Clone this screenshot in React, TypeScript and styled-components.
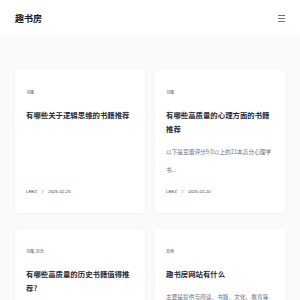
import React from "react";
import styled, { createGlobalStyle } from "styled-components";

const GlobalStyle = createGlobalStyle`
  html {
    overflow: hidden;
  }
  body {
    margin: 0;
    background-color: #f9fafb;
    font-family: "Liberation Sans", "Noto Sans CJK SC", sans-serif;
    color: #1f2937;
  }
`;

const Header = styled.header`
  display: flex;
  align-items: center;
  justify-content: space-between;
  height: 37px;
  padding: 0 15px;
  background-color: #ffffff;
`;

const Logo = styled.span`
  font-family: "Noto Sans CJK SC", sans-serif;
  font-size: 9px;
  font-weight: 700;
  color: #111827;
  line-height: 1;
`;

const MenuButton = styled.button`
  display: flex;
  border: 0;
  padding: 0;
  margin: 0;
  background: transparent;
  color: #64748b;
  cursor: pointer;
`;

const Grid = styled.main`
  display: grid;
  grid-template-columns: 130px 130px;
  column-gap: 10px;
  row-gap: 16px;
  padding: 33px 15px 20px;
`;

const Card = styled.article`
  display: flex;
  flex-direction: column;
  padding: 19px 11px 18px;
  background-color: #ffffff;
  border-radius: 2px;
  box-shadow: 0 1px 3px rgba(15, 23, 42, 0.04);
`;

const Tag = styled.div`
  font-family: "Noto Sans CJK SC", sans-serif;
  font-size: 4px;
  line-height: 6px;
  color: #4b5563;
`;

const Title = styled.h2`
  margin: 13px 0 0;
  font-family: "Noto Sans CJK SC", sans-serif;
  font-size: 7.4px;
  font-weight: 700;
  line-height: 14px;
  color: #1f2937;
`;

const Desc = styled.p`
  margin: 7px 0 11px;
  font-family: "Noto Sans CJK SC", sans-serif;
  font-size: 5.7px;
  line-height: 17.5px;
  color: #6b7280;
`;

const Meta = styled.div`
  display: flex;
  margin-top: auto;
  font-family: "Liberation Sans", sans-serif;
  font-size: 4.4px;
  line-height: 6px;
  color: #374151;
`;

const Slash = styled.span`
  margin: 0 5px;
`;

type Post = {
  id: number;
  tag: string;
  title: string;
  desc?: string;
  author: string;
  date: string;
};

const posts: Post[] = [
  {
    id: 1,
    tag: "书籍",
    title: "有哪些关于逻辑思维的书籍推荐",
    author: "LEEZ",
    date: "2025-02-25",
  },
  {
    id: 2,
    tag: "书籍",
    title: "有哪些高质量的心理方面的书籍推荐",
    desc: "以下是豆瓣评分9.0以上的21本高分心理学书...",
    author: "LEEZ",
    date: "2025-02-20",
  },
  {
    id: 3,
    tag: "书籍, 历史",
    title: "有哪些高质量的历史书籍值得推荐?",
    desc: "以下是一些高质量的历史书籍推荐,涵盖中国史...",
    author: "LEEZ",
    date: "2025-02-18",
  },
  {
    id: 4,
    tag: "其他",
    title: "趣书房网站有什么",
    desc: "主要是提供与阅读、书籍、文化、教育等相关的内容...",
    author: "LEEZ",
    date: "2025-02-15",
  },
];

const MenuIcon = () => (
  <svg width="7" height="7" viewBox="0 0 7 7" fill="currentColor">
    <rect x="0" y="0" width="7" height="1" />
    <rect x="0" y="3" width="7" height="1" />
    <rect x="0" y="6" width="7" height="1" />
  </svg>
);

const App = (): JSX.Element => {
  return (
    <>
      <GlobalStyle />
      <Header>
        <Logo>趣书房</Logo>
        <MenuButton aria-label="menu">
          <MenuIcon />
        </MenuButton>
      </Header>
      <Grid>
        {posts.map(({ id, tag, title, desc, author, date }) => (
          <Card key={id}>
            <Tag>{tag}</Tag>
            <Title>{title}</Title>
            {desc && <Desc>{desc}</Desc>}
            <Meta>
              <span>{author}</span>
              <Slash>/</Slash>
              <span>{date}</span>
            </Meta>
          </Card>
        ))}
      </Grid>
    </>
  );
};

export default App;
